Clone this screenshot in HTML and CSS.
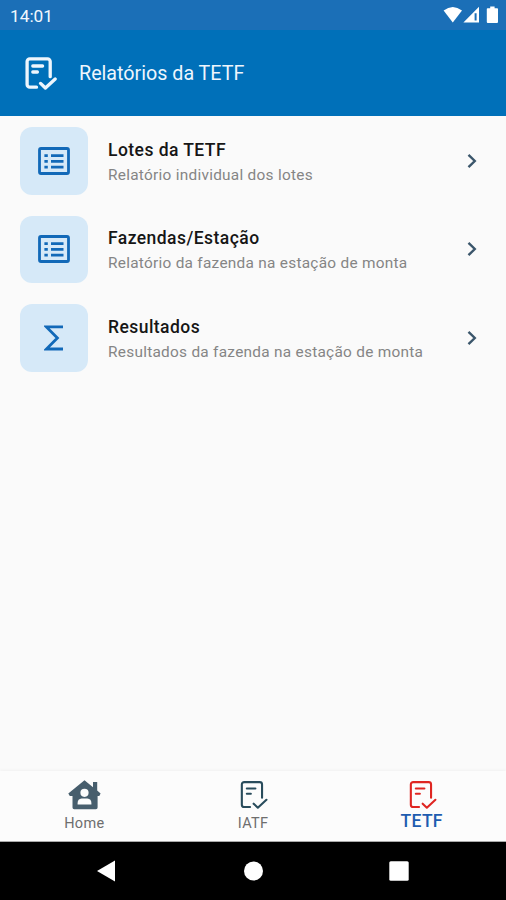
FILE: index.html
```html
<!DOCTYPE html>
<html lang="pt-BR">
<head>
    <meta charset="UTF-8">
    <meta name="viewport" content="width=device-width, initial-scale=1.0">
    <title>Relatórios da TETF</title>
    <link rel="stylesheet" href="styles.css">
</head>
<body>
    <svg class="sprite" width="0" height="0">
        <symbol id="icon-report" viewBox="0 0 32 33">
            <path d="M11.5 30.2H4.8a2.7 2.7 0 0 1-2.7-2.7V4.5a2.7 2.7 0 0 1 2.7-2.7h17.7a2.7 2.7 0 0 1 2.7 2.7v15.2"/>
            <path d="M7.8 9H17.6M7.8 15H12.4M15.6 26.4l4.8 4.6L30.2 22"/>
        </symbol>
        <symbol id="icon-list" viewBox="0 0 32 28">
            <rect x="1.5" y="1.5" width="29" height="25" rx="1.5"/>
            <path d="M13 8.7h12.5M13 14.4h12.5M13 20.2h12.5"/>
            <path d="M6.4 8.7h3.4M6.4 14.4h3.4M6.4 20.2h3.4"/>
        </symbol>
        <symbol id="icon-chevron" viewBox="0 0 10 16">
            <path d="M1.5 1.8 7.8 8l-6.3 6.2"/>
        </symbol>
    </svg>

    <div class="screen">
        <div class="status-bar">
            <span class="time">14:01</span>
            <svg class="status-icons" width="56" height="18" viewBox="0 0 56 18">
                <path d="M0.6 4.6Q9.8-2.4 19 4.6L9.8 16.4z"/>
                <path fill-rule="evenodd" d="M20.4 16.6 36 0.8V16.6zM31.6 7.2V14.5h2V7.2z"/>
                <path d="M44.6 2.2h2.6V.4h4.4v1.8h2.6q.8 0 .8.8v13q0 1-1 1h-9.2q-1 0-1-1V3q0-.8.8-.8z"/>
            </svg>
        </div>

        <header class="app-bar">
            <svg class="report" width="32" height="33"><use href="#icon-report"/></svg>
            <h1>Relatórios da TETF</h1>
        </header>

        <main class="list">
            <div class="item">
                <div class="tile"><svg class="list-icon" width="32" height="28"><use href="#icon-list"/></svg></div>
                <div class="item-text">
                    <h2>Lotes da TETF</h2>
                    <p>Relatório individual dos lotes</p>
                </div>
                <svg class="chevron" width="10" height="16"><use href="#icon-chevron"/></svg>
            </div>
            <div class="item">
                <div class="tile"><svg class="list-icon" width="32" height="28"><use href="#icon-list"/></svg></div>
                <div class="item-text">
                    <h2>Fazendas/Estação</h2>
                    <p>Relatório da fazenda na estação de monta</p>
                </div>
                <svg class="chevron" width="10" height="16"><use href="#icon-chevron"/></svg>
            </div>
            <div class="item">
                <div class="tile">
                    <svg class="sigma" width="20" height="26" viewBox="0 0 20 26">
                        <path d="M19 1.9H2.4L13.4 13 2.4 24H19"/>
                    </svg>
                </div>
                <div class="item-text">
                    <h2>Resultados</h2>
                    <p>Resultados da fazenda na estação de monta</p>
                </div>
                <svg class="chevron" width="10" height="16"><use href="#icon-chevron"/></svg>
            </div>
        </main>

        <nav class="tabs">
            <div class="tab">
                <svg class="home" width="33" height="30" viewBox="0 0 33 30">
                    <path d="M16.5 0.3 25 7.2V2h4.2v8.6l3.4 2.8-1.3 2.5H29.6V27.6q0 1.7-1.7 1.7H6.2q-1.7 0-1.7-1.7V15.9H1.8L.3 13.4z"/>
                    <circle class="cutout" cx="16.5" cy="12.8" r="4.1"/>
                    <path class="cutout" d="M9.6 24.6v-1.6q0-4 4-4.4h5.8q4 .4 4 4.4v1.6z"/>
                </svg>
                <span>Home</span>
            </div>
            <div class="tab">
                <svg class="report" width="28" height="30"><use href="#icon-report"/></svg>
                <span>IATF</span>
            </div>
            <div class="tab active">
                <svg class="report" width="28" height="30"><use href="#icon-report"/></svg>
                <span>TETF</span>
            </div>
        </nav>

        <div class="system-nav">
            <svg width="20" height="22" viewBox="0 0 20 22"><path d="M18 .5v21L0 11z"/></svg>
            <svg width="20" height="20" viewBox="0 0 20 20"><circle cx="10.5" cy="10" r="9.5"/></svg>
            <svg width="20" height="20" viewBox="0 0 20 20"><rect x=".3" y=".3" width="19.4" height="19.4" rx="1.5"/></svg>
        </div>
    </div>
</body>
</html>
```

FILE: styles.css
```css
body {
    margin: 0;
    font-family: Roboto, "Liberation Sans", sans-serif;
    background-color: #fafafa;
}
h1, h2, p {
    margin: 0;
}
svg {
    display: block;
    flex-shrink: 0;
}
.sprite {
    display: none;
}
.screen {
    height: 900px;
    display: flex;
    flex-direction: column;
    overflow: hidden;
}
.status-bar {
    height: 30px;
    box-sizing: border-box;
    padding: 2px 7px 0 10px;
    display: flex;
    align-items: center;
    justify-content: space-between;
    background-color: #1b6fb7;
    color: #f2f8fe;
}
.time {
    font-size: 17.3px;
    font-weight: 400;
}
.status-icons {
    margin-top: -2px;
    fill: #fff;
}
.app-bar {
    height: 86px;
    box-sizing: border-box;
    padding-left: 25px;
    display: flex;
    align-items: center;
    gap: 22px;
    background-color: #0070b9;
    color: #eef6fd;
}
.app-bar h1 {
    padding-top: 1px;
    font-size: 19.7px;
    font-weight: 400;
    line-height: 24px;
}
.report {
    fill: none;
    stroke: currentColor;
    stroke-width: 3.3;
    stroke-linecap: round;
    stroke-linejoin: round;
}
.list {
    flex: 1;
    padding: 11px 29px 0 20px;
    display: flex;
    flex-direction: column;
    gap: 21px;
}
.item {
    display: flex;
    align-items: center;
}
.tile {
    width: 68px;
    height: 67.5px;
    margin-right: 20px;
    border-radius: 12px;
    display: flex;
    align-items: center;
    justify-content: center;
    background-color: #d6e9f8;
}
.list-icon,
.sigma {
    fill: none;
    stroke: #1269b8;
    stroke-width: 2.8;
}
.item-text {
    flex: 1;
    padding-top: 1px;
}
.item-text h2 {
    font-size: 17.5px;
    font-weight: 500;
    line-height: 24px;
    letter-spacing: 0.45px;
    color: #161616;
}
.item-text p {
    font-size: 15.4px;
    line-height: 20px;
    margin-top: 3px;
    letter-spacing: 0.27px;
    color: #858585;
}
.chevron {
    fill: none;
    stroke: #3b566b;
    stroke-width: 2.4;
}
.tabs {
    height: 71px;
    box-sizing: border-box;
    display: flex;
    padding-top: 9px;
    background-color: #fcfcfc;
    box-shadow: 0 -1px 3px rgba(0, 0, 0, 0.04);
    border-bottom: 1px solid #aaa;
}
.tab {
    flex: 1;
    display: flex;
    flex-direction: column;
    align-items: center;
    font-size: 14.5px;
    line-height: 18px;
    color: #6e6e6e;
}
.tab span {
    margin-top: 5px;
    letter-spacing: 0.3px;
}
.tab .report {
    margin-left: 2px;
    color: #294c5c;
    stroke-width: 2.4;
}
.home {
    fill: #475e6d;
}
.cutout {
    fill: #fcfcfc;
}
.tab.active .report {
    color: #df2622;
}
.tab.active span {
    margin-top: 2px;
    font-size: 17.5px;
    font-weight: 500;
    color: #1e5cb0;
}
.system-nav {
    height: 58px;
    display: flex;
    align-items: center;
    justify-content: center;
    gap: 126px;
    background-color: #000;
    fill: #fff;
}
```
